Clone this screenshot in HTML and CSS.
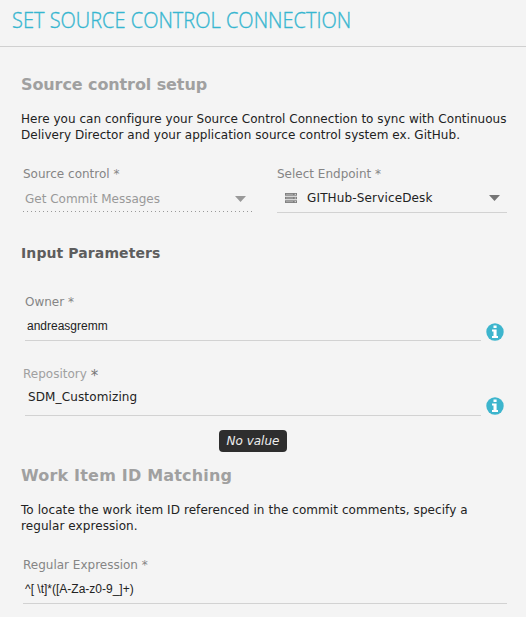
FILE: index.html
```html
<!DOCTYPE html>
<html lang="en">
<head>
<meta charset="utf-8">
<title>Set Source Control Connection</title>
<link rel="stylesheet" href="styles.css">
</head>
<body>
<header class="header"><h1 class="title">SET SOURCE CONTROL CONNECTION</h1></header>
<main class="content">
  <h2 class="section-title">Source control setup</h2>
  <p class="text intro"><span class="line-a">Here you can configure your Source Control Connection to sync with Continuous</span><br><span class="line-b">Delivery Director and your application source control system ex. GitHub.</span></p>
  <div class="selects">
    <div class="select disabled">
      <div class="label source-label">Source control <span class="star">*</span></div>
      <div class="select-value"><span class="source-value">Get Commit Messages</span><svg class="arrow" viewBox="0 0 11 6"><path d="M0 0H11L5.5 6Z"/></svg></div>
    </div>
    <div class="select">
      <div class="label endpoint-label">Select Endpoint <span class="star">*</span></div>
      <div class="select-value"><svg class="server" viewBox="0 0 12 10"><path d="M0 0H12V2.7H0ZM0 3.7H12V6.3H0ZM0 7.3H12V10H0Z" fill="#808080"/><path d="M1 1.35H8M1 5H8M1 8.65H8" stroke="#b4b4b4" stroke-width=".8"/><path d="M9.7 1.35H11M9.7 5H11M9.7 8.65H11" stroke="#ddd" stroke-width="1"/></svg><span class="endpoint-value">GITHub-ServiceDesk</span><svg class="arrow" viewBox="0 0 11 6"><path d="M0 0H11L5.5 6Z"/></svg></div>
    </div>
  </div>
  <h3 class="subsection-title">Input Parameters</h3>
  <div class="param owner">
    <div class="field">
      <div class="label owner-label">Owner <span class="star">*</span></div>
      <div class="input owner-value">andreasgremm</div>
    </div>
    <svg class="info" viewBox="0 0 18 18"><circle cx="9" cy="9" r="8.7" fill="#3db5cd"/><path d="M7.5 2.5H10.6V5H7.5ZM6 6.5H10.6V13H12V15H6V13H7.5V8.5H6Z" fill="#fff"/></svg>
  </div>
  <div class="param repository">
    <div class="field">
      <div class="label repo-label">Repository <span class="star">*</span></div>
      <div class="input repo-value">SDM_Customizing</div>
    </div>
    <svg class="info" viewBox="0 0 18 18"><circle cx="9" cy="9" r="8.7" fill="#3db5cd"/><path d="M7.5 2.5H10.6V5H7.5ZM6 6.5H10.6V13H12V15H6V13H7.5V8.5H6Z" fill="#fff"/></svg>
    <div class="tooltip">No value</div>
  </div>
  <h2 class="section-title matching">Work Item ID Matching</h2>
  <p class="text matching-text"><span class="line-c">To locate the work item ID referenced in the commit comments, specify a</span><br><span class="line-d">regular expression.</span></p>
  <div class="regex">
    <div class="label regex-label">Regular Expression <span class="star">*</span></div>
    <div class="input regex-value">^[ \t]*([A-Za-z0-9_]+)</div>
  </div>
</main>
</body>
</html>
```
FILE: styles.css
```css
* { box-sizing: border-box; }
body { margin: 0; background: #f4f4f4; color: #222; font: 12px/16px Verdana, "DejaVu Sans", sans-serif; white-space: nowrap; }
h1, h2, h3, p { margin: 0; }
svg { display: block; flex: none; }
.header { height: 47px; border-bottom: 1px solid #d0d0d0; padding: 4px 0 0 12px; }
.title { font: 300 22px/30px "Open Sans", sans-serif; color: #36b6d0; -webkit-text-stroke: .35px #36b6d0; transform: scaleX(.909); transform-origin: 0 0; width: max-content; }
.content { padding: 28px 19px 0 21px; }
.section-title { font-size: 16px; line-height: 20px; color: #a0a0a0; letter-spacing: -.1px; }
.intro { margin-top: 16px; }
.line-a, .line-b { letter-spacing: .036px; }
.line-c, .line-d { letter-spacing: .075px; }
.selects { display: grid; grid-template-columns: 230px 230px; column-gap: 24px; margin: 23px 0 0 2px; }
.select { border-bottom: 1px solid #d2d2d2; height: 47px; }
.disabled { height: 46px; border-bottom: 0; background: repeating-linear-gradient(90deg, #999 0 1px, transparent 1px 4px) 0 100% / 100% 1px no-repeat; }
.label { color: #858585; }
.select-value { display: flex; align-items: center; margin-top: 8px; height: 16px; padding: 0 7px 0 8px; color: #222; }
.disabled .select-value { margin-top: 9px; padding-left: 2px; color: #999; }
.arrow { width: 11px; height: 6px; margin-left: auto; fill: #757575; }
.disabled .arrow { fill: #999; }
.server { width: 12px; height: 10px; margin-right: 10px; }
.endpoint-value { letter-spacing: .15px; }
.subsection-title { font-size: 14px; line-height: 18px; margin-top: 31px; color: #5d5d5d; letter-spacing: .1px; }
.param { position: relative; display: flex; align-items: flex-end; margin-left: 4px; }
.field { width: 456px; border-bottom: 1px solid #d2d2d2; }
.owner { margin-top: 32px; }
.owner .field { height: 47px; }
.repository { margin-top: 25px; }
.repository .field { height: 50px; }
.info { width: 18px; height: 18px; margin-left: 5px; }
.repository .info { margin-bottom: 1px; }
.input { color: #222; margin-top: 8px; }
.owner-value, .regex-value { font-family: "Liberation Sans", sans-serif; padding-left: 2px; }
.repo-label { margin-left: -2px; color: #a0a0a0; }
.repo-label .star { display: inline-block; height: 14px; font-size: 15px; line-height: 20px; vertical-align: top; color: #777; }
.repo-value { margin-top: 7px; padding-left: 3px; letter-spacing: .13px; }
.tooltip { position: absolute; left: 194px; top: 64px; width: 68px; height: 22px; border-radius: 4px; background: #2e2e2e; color: #eee; font-style: italic; line-height: 22px; text-align: center; }
.matching { margin-top: 50px; letter-spacing: .19px; }
.matching-text { margin-top: 16px; }
.regex { margin: 23px 0 0 2px; height: 47px; border-bottom: 1px solid #d2d2d2; }
```
